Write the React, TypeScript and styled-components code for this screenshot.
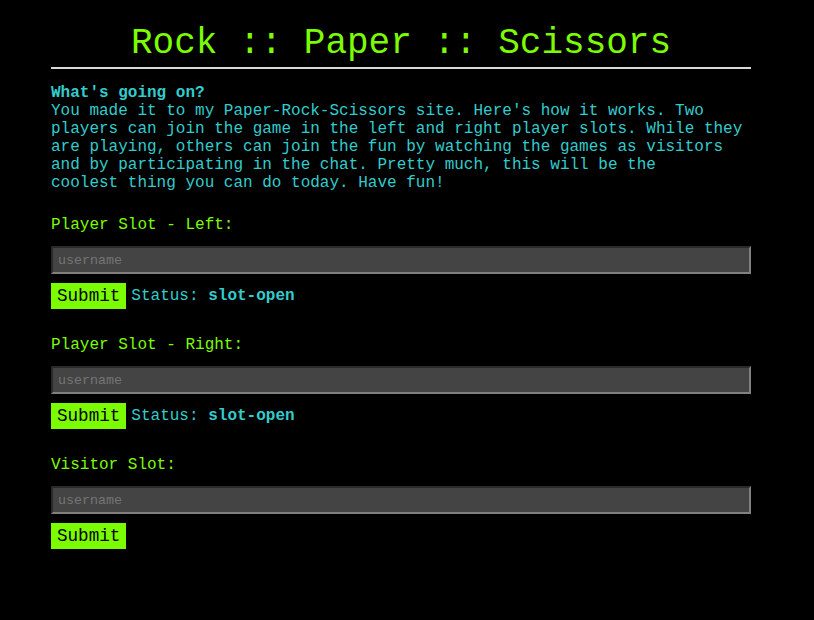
import styled, { createGlobalStyle } from "styled-components";

const MONO = `"Courier New", Courier, "Nimbus Mono PS", "Nimbus Mono L", FreeMono, "Liberation Mono", monospace`;

const GlobalStyle = createGlobalStyle`
  html, body {
    margin: 0;
    background-color: #000;
  }
  body {
    font-family: ${MONO};
    font-size: 16px;
  }
`;

type SlotProps = {
  label: string;
  status?: string;
};

const Slot = ({ label, status }: SlotProps) => {
  return (
    <SlotContainer>
      <SlotLabel>{label}</SlotLabel>
      <UsernameInput type="text" placeholder="username" />
      <SubmitRow>
        <SubmitButton type="button">Submit</SubmitButton>
        {status ? (
          <Status>
            Status: <b>{status}</b>
          </Status>
        ) : (
          <></>
        )}
      </SubmitRow>
    </SlotContainer>
  );
};

export default function App() {
  return (
    <>
      <GlobalStyle />
      <Page>
        <Title>Rock :: Paper :: Scissors</Title>
        <Divider />
        <Intro>
          <IntroHeading>What's going on?</IntroHeading>
          You made it to my Paper-Rock-Scissors site. Here's how it works. Two
          players can join the game in the left and right player slots. While
          they are playing, others can join the fun by watching the games as
          visitors and by participating in the chat. Pretty much, this will be
          the
          <br />
          coolest thing you can do today. Have fun!
        </Intro>
        <Slot label="Player Slot - Left:" status="slot-open" />
        <Slot label="Player Slot - Right:" status="slot-open" />
        <Slot label="Visitor Slot:" />
      </Page>
    </>
  );
}

const Page = styled.div`
  width: 700px;
  margin-left: 51px;
  padding-top: 23px;
`;

const Title = styled.h1`
  margin: 0;
  font-size: 36px;
  font-weight: normal;
  text-align: center;
  color: #7cfc00;
`;

const Divider = styled.hr`
  margin: 3px 0 15px;
  border: none;
  border-top: 2px solid #d8d8d8;
  height: 0;
`;

const Intro = styled.div`
  color: #33cccc;
  line-height: 18px;
  margin-bottom: 24px;
`;

const IntroHeading = styled.div`
  font-weight: bold;
`;

const SlotContainer = styled.div`
  margin-bottom: 27px;
`;

const SlotLabel = styled.div`
  color: #7cfc00;
  line-height: 18px;
`;

const UsernameInput = styled.input`
  display: block;
  box-sizing: border-box;
  width: 100%;
  height: 28px;
  margin-top: 12px;
  padding: 0 5px;
  background-color: #444;
  border: 2px solid;
  border-color: #2a2a2a #808080 #808080 #2a2a2a;
  color: #ccc;
  font-family: ${MONO};
  font-size: 13.33px;
  outline: none;

  ::placeholder {
    color: #777;
  }
`;

const SubmitRow = styled.div`
  display: flex;
  align-items: center;
  gap: 5px;
  margin-top: 9px;
`;

const SubmitButton = styled.button`
  background-color: #7cfc00;
  color: #000;
  border: none;
  padding: 3px 6px;
  font-family: ${MONO};
  font-size: 17.6px;
  line-height: 20px;
  cursor: pointer;
`;

const Status = styled.span`
  color: #33cccc;
`;
